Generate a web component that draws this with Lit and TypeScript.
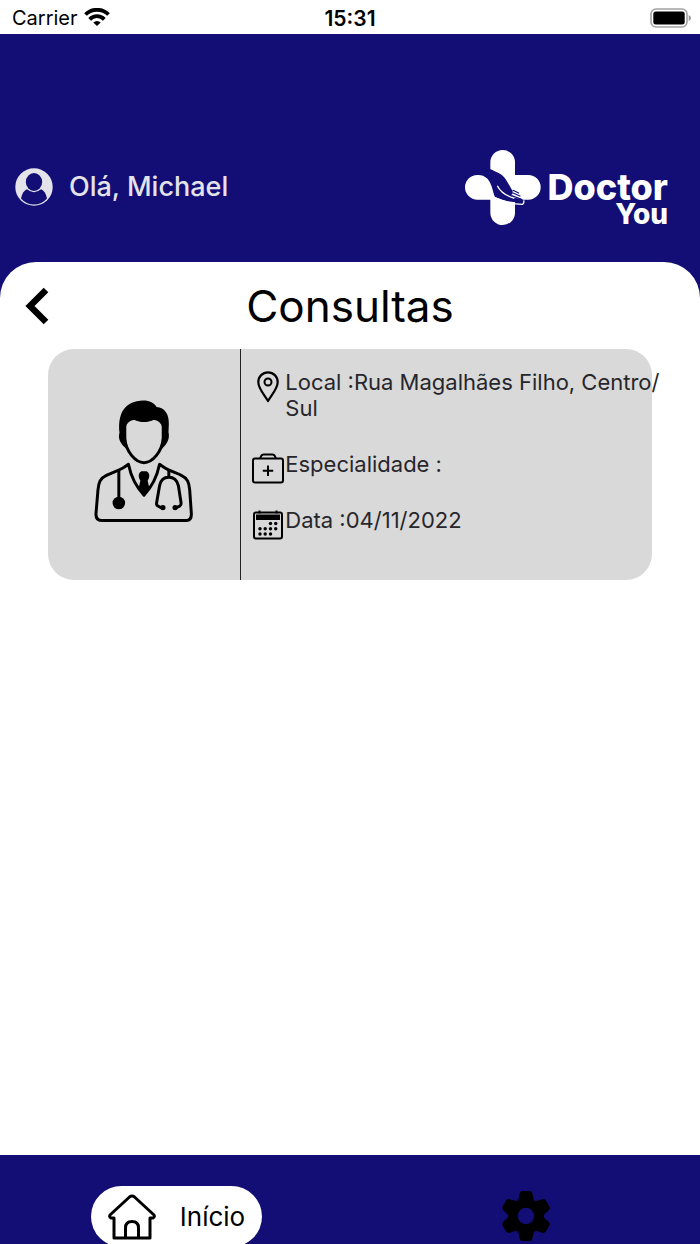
import { LitElement, html, css, svg } from "lit";
import { customElement, property } from "lit/decorators.js";

const pinIcon = svg`<svg viewBox="0 0 32 32" width="32" height="32" fill="none" stroke="#000" aria-hidden="true">
  <path d="M16 30C13 24.500 6.300 18 6.300 11A9.700 9.700 0 0 1 25.700 11C25.700 18 19 24.500 16 30Z" stroke-width="2.200" stroke-linejoin="round"/>
  <circle cx="16" cy="11" r="3.500" stroke-width="2"/></svg>`;

const kitIcon = svg`<svg viewBox="0 0 32 32" width="32" height="32" fill="none" stroke="#000" stroke-width="2" stroke-linejoin="round" aria-hidden="true">
  <rect x="1" y="5.500" width="30" height="24" rx="2"/>
  <path d="M8 5.500L9.500 2.500Q10 1.500 11.500 1.500H20.500Q22 1.500 22.500 2.500L24 5.500"/>
  <path d="M16 12.500V23M10.800 17.800H21.200"/></svg>`;

const calendarIcon = svg`<svg viewBox="0 0 32 32" width="32" height="32" aria-hidden="true">
  <rect x="2" y="3.500" width="28" height="26" rx="2" fill="none" stroke="#000" stroke-width="2"/>
  <path d="M4 5.500H28V11H4ZM6.500 1.500H8.500V4.500H6.500ZM23.500 1.500H25.500V4.500H23.500Z"/>
  <g>${[
    [18.5, 14.5], [23.7, 14.5],
    [8, 19.7], [13.2, 19.7], [18.5, 19.7], [23.7, 19.7],
    [8, 25], [13.2, 25], [18.5, 25],
  ].map(([x, y]) => svg`<circle cx=${x} cy=${y} r="1.700"/>`)}</g></svg>`;

const doctorIcon = svg`<svg class="doctor" viewBox="41 40 302 374" role="img" aria-label="Médico" fill="none" stroke="#000" stroke-width="9" stroke-linecap="round" stroke-linejoin="round">
  <path d="M134 118V158C137 198 166 232 192 232S247 198 250 158V118"/>
  <path fill="#000" stroke="none" d="M118 142C112 82 134 45 190 44C209 44 223 51 230 64C255 66 268 86 267 116L266 140C270 156 264 172 252 184L246 190C248 170 249 150 248 132C247 118 240 106 224 103C216 103 212 109 192 109S168 103 160 103C144 106 137 118 136 132C135 150 136 170 139 190L132 184C120 172 113 158 118 142Z"/>
  <path d="M145 237L132 246C112 258 92 263 77 271C59 279 55 294 53 314L47 386Q46 406 64 407H320Q336 406 335 386L330 314C328 294 324 279 306 271C291 263 270 258 252 246L239 237C232 271 217 304 192 330C167 304 152 271 145 237Z"/>
  <path fill="#000" stroke="none" d="M184 258H200Q211 265 207 278L203 287L208 308L192 333L176 308L181 287L177 278Q173 265 184 258Z"/>
  <path d="M116 258V340"/><circle cx="116" cy="354" r="19" fill="#000" stroke="none"/>
  <path d="M267 258V275M242 367L234 363Q229 360 230 354L239 302C242 285 252 276 267 276S292 285 296 302L304 354Q305 360 300 363L291 367"/>
  <circle cx="249" cy="368" r="8" fill="#000" stroke="none"/><circle cx="286" cy="368" r="8" fill="#000" stroke="none"/></svg>`;

const gearIcon = svg`<svg viewBox="-30 -29 60 60" width="60" height="60" aria-hidden="true">
  <circle r="13" fill="none" stroke="#000" stroke-width="9.500"/>
  ${[0, 60, 120, 180, 240, 300].map(
    (angle) => svg`<path transform="rotate(${angle})" d="M-10.500 -12C-7 -16 -7.500 -18 -6.500 -22Q-6 -25 -3.500 -25H3.500Q6 -25 6.500 -22C7.500 -18 7 -16 10.500 -12L0 -9Z"/>`
  )}</svg>`;

@customElement("appointment-card")
export class AppointmentCard extends LitElement {
  @property() local = "";
  @property() especialidade = "";
  @property() data = "";

  static styles = css`
    :host { display: block; }
    .card {
      display: grid;
      grid-template-columns: 32% 1fr;
      min-height: 231px;
      box-sizing: border-box;
      border-radius: 26px;
      background: #d9d9d9;
    }
    .photo {
      display: grid;
      place-items: center;
      border-right: 1px solid #222;
      padding-bottom: 8px;
    }
    .doctor { width: 100px; height: 124px; }
    .details {
      display: grid;
      align-content: start;
      gap: 30px;
      margin: 0 -12px 0 0;
      padding: 20px 0 20px 11px;
      list-style: none;
      color: #27262b;
      font-size: 22px;
      font-weight: 400;
      line-height: 26px;
    }
    .row { display: flex; gap: 1px; min-height: 26px; }
    .icon { flex: none; width: 32px; height: 26px; }
    .icon svg { display: block; margin-top: 2px; }
  `;

  render() {
    // A zero-width space lets long addresses wrap after a slash.
    const rows = [
      { icon: pinIcon, text: `Local :${this.local.replace(/\//g, "/\u200b")}` },
      { icon: kitIcon, text: `Especialidade :${this.especialidade}` },
      { icon: calendarIcon, text: `Data :${this.data}` },
    ];
    return html`<article class="card">
      <div class="photo">${doctorIcon}</div>
      <ul class="details">
        ${rows.map((row) => html`<li class="row"><span class="icon">${row.icon}</span><span>${row.text}</span></li>`)}
      </ul>
    </article>`;
  }
}

@customElement("app-root")
export class AppRoot extends LitElement {
  static styles = css`
    :host {
      display: flex;
      flex-direction: column;
      height: 100vh;
      overflow: hidden;
      background: #120e76;
      color: #000;
      font-family: Inter, "Liberation Sans", sans-serif;
    }
    .status {
      display: grid;
      grid-template-columns: 1fr auto 1fr;
      align-items: center;
      height: 34px;
      flex: none;
      box-sizing: border-box;
      padding: 2px 9px 0;
      background: #fff;
      font-size: 20px;
    }
    .carrier { display: flex; align-items: center; gap: 6px; padding-left: 3px; }
    .clock { font-size: 21px; font-weight: 600; }
    .battery { justify-self: end; display: block; }
    .top {
      display: flex;
      align-items: center;
      justify-content: space-between;
      flex: none;
      padding: 113px 32px 35px 15px;
    }
    .user {
      display: flex;
      align-items: center;
      gap: 16px;
      color: #e4e3ea;
      font-size: 27px;
      font-weight: 500;
      line-height: 32px;
    }
    .brand { display: flex; align-items: center; gap: 6px; color: #fff; }
    .name {
      display: grid;
      gap: 1px;
      justify-items: end;
      padding-top: 27px;
      font-size: 36px;
      font-weight: 800;
      line-height: 26px;
    }
    .second { font-size: 28px; }
    .sheet {
      flex: 1;
      min-height: 0;
      padding: 0 48px;
      border-radius: 36px 36px 0 0;
      background: #fff;
    }
    .heading {
      display: grid;
      grid-template-columns: 1fr auto 1fr;
      align-items: center;
      height: 87px;
      margin: 0 -24px;
    }
    .back {
      justify-self: start;
      padding: 0;
      border: 0;
      background: none;
      cursor: pointer;
    }
    .back svg { display: block; }
    h1 { margin: 0; font-size: 44px; font-weight: 400; line-height: 52px; }
    .nav {
      display: grid;
      grid-template-columns: 1fr 1fr;
      justify-items: center;
      align-items: start;
      flex: none;
      height: 89px;
      box-sizing: border-box;
      padding: 31px 0 0 2px;
    }
    .link {
      display: flex;
      align-items: center;
      height: 61px;
      box-sizing: border-box;
      color: #000;
      font-size: 26px;
      text-decoration: none;
    }
    .active { gap: 24px; padding: 0 17px; border-radius: 31px; background: #fff; }
  `;

  render() {
    return html`
      <div class="status">
        <span class="carrier">Carrier
          <svg width="26" height="20" viewBox="0 0 26 20" fill="none" stroke="#000" stroke-width="3.800" aria-hidden="true">
            <path d="M1.500 6.500A16.300 16.300 0 0 1 24.500 6.500M5.700 11.300A10.200 10.200 0 0 1 20.300 11.300"/>
            <path d="M13 18L9.300 14.500A5.300 5.300 0 0 1 16.700 14.500Z" fill="#000" stroke="none"/>
          </svg>
        </span>
        <span class="clock">15:31</span>
        <svg class="battery" width="41" height="20" viewBox="0 0 41 20" aria-label="Bateria" role="img">
          <rect x="1" y="1" width="36" height="18" rx="5" fill="none" stroke="#a2a2a2" stroke-width="1.600"/>
          <rect x="3.300" y="3.500" width="31.400" height="13" rx="2.500"/>
          <path d="M38.700 7Q41 8 41 10T38.700 13Z" fill="#999"/>
        </svg>
      </div>
      <header class="top">
        <div class="user">
          <svg width="38" height="38" viewBox="0 0 38 38" aria-hidden="true">
            <circle cx="19" cy="19" r="18.700" fill="#e4e3ea"/>
            <path d="M19 20C28 20 30.500 24 32 30.500A16.900 16.900 0 0 1 6 30.500C7.500 24 10 20 19 20Z" fill="#120e76"/>
            <ellipse cx="19" cy="14.300" rx="9.500" ry="10" fill="#e4e3ea"/>
            <ellipse cx="19" cy="14" rx="8.200" ry="8.900" fill="#120e76"/>
          </svg>
          <span>Olá, Michael</span>
        </div>
        <div class="brand">
          <svg width="76" height="75" viewBox="30 27 228 225" aria-hidden="true">
            <path fill="#fff" d="M106 64A37 37 0 0 1 180 64V102H220A37 37 0 0 1 220 176H180V215A37 37 0 0 1 106 215V176H67A37 37 0 0 1 67 102Q84 101 96 112L106 90Z"/>
            <path d="M105 84C124 93 143 99 153 116L171 147Q177 157 168 163L177 170L201 174Q207 177 202 184C174 186 143 179 120 168C112 152 112 124 90 106Q104 102 105 84Z" fill="#120e76"/>
            <path d="M127 134C136 154 153 164 178 172" fill="none" stroke="#fff" stroke-width="4"/>
            <path d="M174 148L191 156M174 156L195 165M170 164L198 174" stroke="#120e76" stroke-width="3.500" stroke-linecap="round"/>
            <path d="M120 170C144 181 174 190 203 190Q208 186 206 178" fill="none" stroke="#fff" stroke-width="4"/>
          </svg>
          <div class="name"><span>Doctor</span><span class="second">You</span></div>
        </div>
      </header>
      <main class="sheet">
        <div class="heading">
          <button class="back" aria-label="Voltar">
            <svg width="25" height="38" viewBox="0 0 25 38" fill="none" stroke="#000" stroke-width="6.500"><path d="M22 3L6 19L22 35"/></svg>
          </button>
          <h1>Consultas</h1>
        </div>
        <appointment-card local="Rua Magalhães Filho, Centro/Sul" data="04/11/2022"></appointment-card>
      </main>
      <nav class="nav">
        <a class="link active" href="#inicio" aria-current="page">
          <svg width="48" height="46" viewBox="0 0 48 46" fill="none" stroke="#000" stroke-width="3" stroke-linejoin="round" aria-hidden="true">
            <path d="M6 24V44H42V24H45Q47.500 22.500 45.500 20.500L26.500 3Q24 1 21.500 3L2.500 20.500Q0.500 22.500 3 24Z"/>
            <path d="M17.500 44V34Q17.500 27.500 24 27.500T30.500 34V44"/>
          </svg>
          <span>Início</span>
        </a>
        <a class="link" href="#ajustes" aria-label="Ajustes">${gearIcon}</a>
      </nav>
    `;
  }
}
